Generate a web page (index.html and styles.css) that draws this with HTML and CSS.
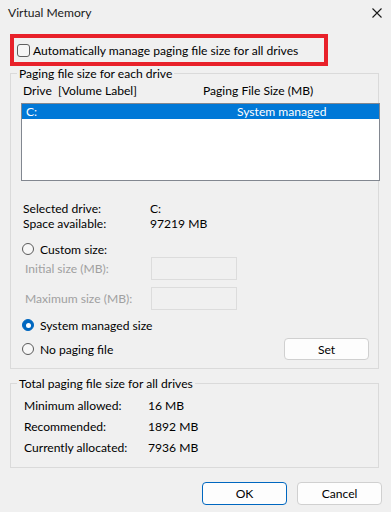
FILE: index.html
```html
<!DOCTYPE html>
<html>
<head>
<meta charset="utf-8">
<link rel="stylesheet" href="styles.css">
</head>
<body>
<div class="dialog">
  <div class="titlebar">
    <span class="title">Virtual Memory</span>
    <svg class="close" width="10" height="10" viewBox="0 0 10 10"><path d="M0.5 0.5 L9.5 9.5 M9.5 0.5 L0.5 9.5" stroke="#1a1a1a" stroke-width="1.1" fill="none"/></svg>
  </div>

  <div class="auto-box">
    <span class="checkbox"></span>
    <span class="auto-label">Automatically manage paging file size for all drives</span>
  </div>

  <fieldset class="group group-drive">
    <legend>Paging file size for each drive</legend>
    <div class="list-head">
      <span class="col-drive">Drive&nbsp; [Volume Label]</span>
      <span>Paging File Size (MB)</span>
    </div>
    <div class="listbox">
      <div class="list-row selected">
        <span class="cell-drive">C:</span>
        <span>System managed</span>
      </div>
    </div>

    <div class="info">
      <div class="info-row"><span class="info-label">Selected drive:</span><span>C:</span></div>
      <div class="info-row"><span class="info-label">Space available:</span><span>97219 MB</span></div>
    </div>

    <div class="radio-row custom-row">
      <span class="radio"></span><span>Custom size:</span>
    </div>
    <div class="size-row first-size">
      <span class="size-label">Initial size (MB):</span>
      <span class="size-input"></span>
    </div>
    <div class="size-row second-size">
      <span class="size-label">Maximum size (MB):</span>
      <span class="size-input"></span>
    </div>

    <div class="radio-row system-row">
      <span class="radio checked"></span><span>System managed size</span>
    </div>
    <div class="radio-row nopage-row">
      <span class="radio"></span><span>No paging file</span>
      <button class="btn set-btn">Set</button>
    </div>
  </fieldset>

  <fieldset class="group group-total">
    <legend>Total paging file size for all drives</legend>
    <div class="totals">
      <div class="total-row"><span class="total-label">Minimum allowed:</span><span>16 MB</span></div>
      <div class="total-row"><span class="total-label">Recommended:</span><span>1892 MB</span></div>
      <div class="total-row"><span class="total-label">Currently allocated:</span><span>7936 MB</span></div>
    </div>
  </fieldset>

  <div class="actions">
    <button class="btn ok-btn">OK</button>
    <button class="btn">Cancel</button>
  </div>
</div>
</body>
</html>
```

FILE: styles.css
```css
* { box-sizing: border-box; }

html, body {
  margin: 0;
  padding: 0;
  background: #f0f0f0;
}

body {
  font-family: Lato, "Noto Sans", "Liberation Sans", sans-serif;
  font-size: 12.1px;
  color: #000;
  width: 391px;
  height: 512px;
  overflow: hidden;
}

.dialog {
  width: 391px;
  height: 512px;
}

.titlebar {
  height: 25px;
  display: flex;
  align-items: center;
  justify-content: space-between;
  padding: 0 9px 0 8px;
  color: #1a1a1a;
}

.close { display: block; }

.auto-box {
  margin: 9px 0 0 10px;
  width: 318px;
  height: 32px;
  border: 4px solid #e8212a;
  display: flex;
  align-items: center;
  padding-left: 3px;
}

.checkbox {
  width: 13px;
  height: 13px;
  border: 1px solid #5f5f5f;
  border-radius: 3px;
  background: #f6f6f6;
  margin-right: 3px;
  flex: none;
}

.group {
  margin: 0 12px 0 10px;
  border: 1px solid #dadada;
  padding: 0;
  min-width: 0;
}

.group legend {
  margin-left: 6px;
  padding: 0 2px;
  line-height: 15px;
}

.group-drive { padding-bottom: 8px; }

.list-head {
  margin-top: 2px;
  height: 16px;
  line-height: 16px;
  padding-left: 12px;
  display: flex;
}

.col-drive { width: 180px; }

.listbox {
  margin: 4px -2px 0 10px;
  height: 78px;
  border: 1px solid #828790;
  background: #fff;
}

.list-row {
  height: 15px;
  line-height: 15px;
  display: flex;
  padding-left: 4px;
}

.list-row.selected {
  background: #0078d7;
  color: #fff;
}

.cell-drive { width: 211px; }

.info { margin-top: 20px; }

.info-row {
  height: 15px;
  line-height: 15px;
  padding-left: 12px;
  display: flex;
}

.info-label { width: 127px; }

.radio-row {
  display: flex;
  align-items: center;
  height: 16px;
  padding-left: 11px;
}

.custom-row { margin-top: 10px; }

.radio {
  width: 12px;
  height: 12px;
  border: 1px solid #5a5a5a;
  border-radius: 50%;
  background: #f7f7f7;
  margin-right: 6px;
  flex: none;
  display: flex;
  align-items: center;
  justify-content: center;
}

.radio.checked {
  background: #0067c0;
  border-color: #0067c0;
}

.radio.checked::after {
  content: "";
  width: 5px;
  height: 5px;
  border-radius: 50%;
  background: #fff;
}

.size-row {
  display: flex;
  align-items: center;
  height: 23px;
  padding-left: 14px;
  color: #a0a0a0;
}

.second-size { margin-top: 7px; }

.size-label { width: 126px; }

.size-input {
  width: 86px;
  height: 23px;
  border: 1px solid #dcdcdc;
  background: #f0f0f0;
}

.system-row { margin-top: 7px; }

.nopage-row {
  margin-top: 5px;
  height: 22px;
  padding-right: 9px;
}

.btn {
  font: inherit;
  color: #000;
  background: #fdfdfd;
  border: 1px solid #d0d0d0;
  border-radius: 4px;
  width: 85px;
  height: 23px;
  padding: 0;
}

.set-btn {
  margin-left: auto;
  height: 22px;
}

.group-total {
  margin-top: 7px;
  padding-bottom: 9px;
}

.totals { margin-top: 4px; }

.total-row {
  height: 21px;
  line-height: 21px;
  padding-left: 13px;
  display: flex;
}

.total-label { width: 124px; }

.actions {
  margin-top: 14px;
  display: flex;
  justify-content: flex-end;
  gap: 10px;
  padding-right: 9px;
}

.ok-btn {
  border: 1px solid #0067c0;
}
```
